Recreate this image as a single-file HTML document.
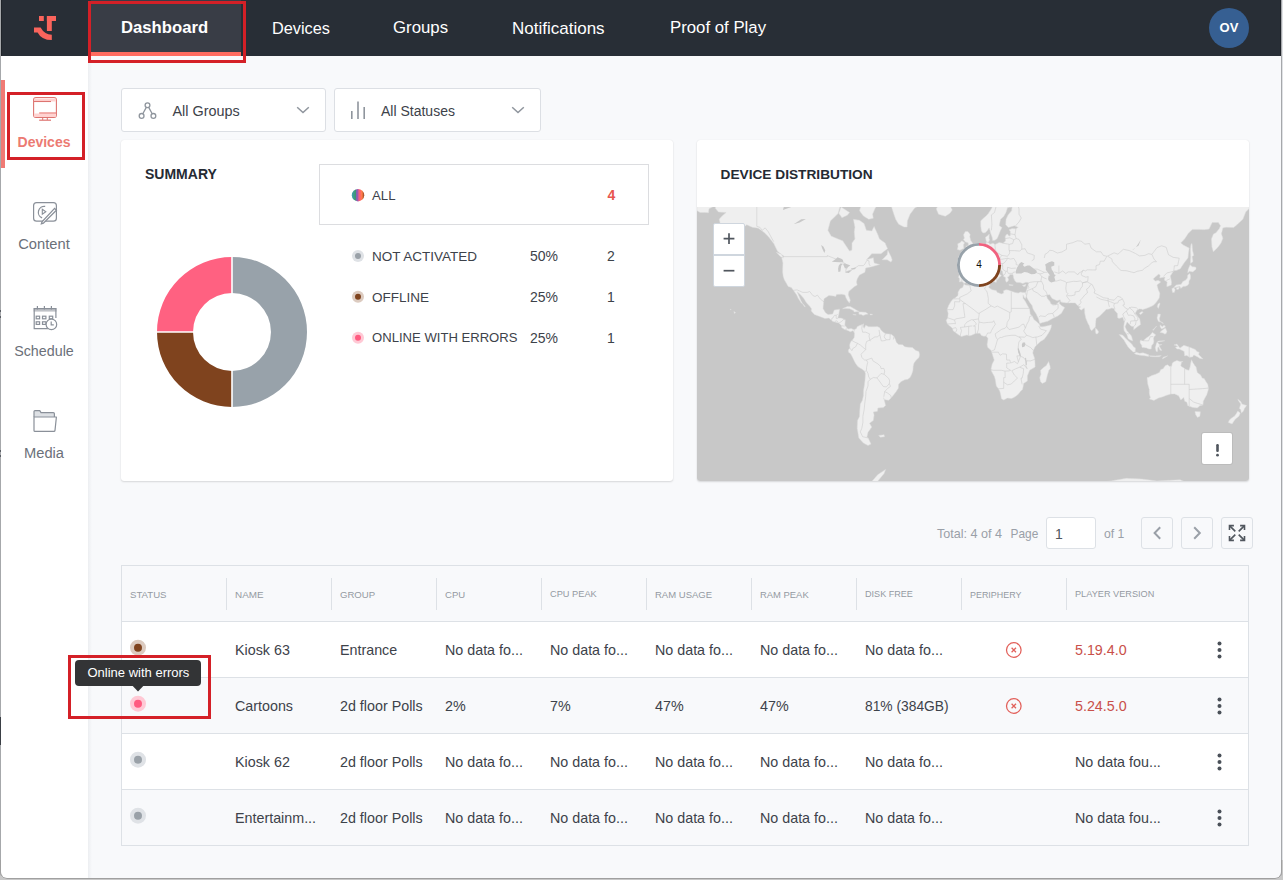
<!DOCTYPE html><html><head><meta charset="utf-8"><style>
*{box-sizing:border-box;margin:0;padding:0}
html,body{width:1283px;height:880px;overflow:hidden;background:#f8f9fb;font-family:"Liberation Sans",sans-serif;position:relative}
.a{position:absolute;line-height:1;white-space:nowrap}
svg{position:absolute;overflow:visible}
#nav{position:absolute;left:0;top:0;width:1283px;height:56px;background:#282e36}
.navt{position:absolute;top:19.6px;font-size:17px;line-height:1;color:#fff;white-space:nowrap}
#side{position:absolute;left:0;top:56px;width:88px;height:824px;background:#fff}
.card{position:absolute;background:#fff;border-radius:3px;box-shadow:0 1px 2px rgba(0,0,0,0.13),0 0 1px rgba(0,0,0,0.10)}
.dd{position:absolute;top:88px;height:44px;background:#fff;border:1px solid #dcdfe4;border-radius:3px}
.t14{font-size:14px;color:#3d424a}
.th{position:absolute;top:589.5px;font-size:10px;line-height:1;color:#949aa2;white-space:nowrap}
.sep{position:absolute;top:578px;width:1px;height:32px;background:#dde1e6}
.row{position:absolute;left:122px;width:1126px;height:56px;border-top:1px solid #dde1e6}
.cell{position:absolute;font-size:14.3px;line-height:1;color:#3d424a;white-space:nowrap}
.red{color:#c9504a}
.pbtn{position:absolute;top:517px;width:32px;height:32px;border:1px solid #dde1e6;border-radius:3px;background:#f8f9fb}
.redbox{position:absolute;border:3px solid #d42027}
</style></head><body>
<div id="nav">
<div style="position:absolute;left:91px;top:0;width:150px;height:56px;background:#393d46"></div>
<div style="position:absolute;left:91px;top:52px;width:150px;height:4px;background:#ff6b5f"></div>
<svg style="left:0;top:0" width="90" height="56" viewBox="0 0 90 56"><g fill="#fa645c"><rect x="39" y="16" width="4.8" height="5"/><rect x="46.9" y="16" width="9.1" height="5"/><rect x="46.9" y="16" width="4.9" height="15"/><path d="M34,27.6 L40.6,27.6 Q44.5,34.7 51.8,34.7 L51.8,40 Q41.5,40 37.6,32.4 L34,32.4 Z"/></g></svg>
<div class="navt" style="left:121px;font-weight:bold;font-size:16.7px">Dashboard</div>
<div class="navt" style="left:272px;font-size:16.3px">Devices</div>
<div class="navt" style="left:393px;font-size:16.8px">Groups</div>
<div class="navt" style="left:512px">Notifications</div>
<div class="navt" style="left:670px;font-size:16.8px">Proof of Play</div>
<div style="position:absolute;left:1209px;top:8px;width:40px;height:40px;border-radius:50%;background:#365f92;color:#fff;font-weight:bold;font-size:13px;line-height:40px;text-align:center">OV</div>
</div>
<div id="side"></div>
<div style="position:absolute;left:1px;top:80px;width:4px;height:88px;background:#f07a74"></div>
<svg style="left:0;top:90px" width="88" height="40" viewBox="0 90 88 40"><rect x="33.6" y="97.5" width="22.8" height="20" rx="2.5" fill="#fff" stroke="#dd7470" stroke-width="1.1"/><path d="M34.2,98.5 h21.6 v3 h-21.6z" fill="#ffd3d1"/><path d="M34.2,113.5 h21.6 v3.5 h-21.6z" fill="#ffd3d1"/><line x1="34" y1="101.5" x2="51" y2="101.5" stroke="#dd7470" stroke-width="1.1"/><line x1="39.2" y1="113" x2="56" y2="113" stroke="#ea7c78" stroke-width="1.2"/><path d="M42.7,117.5 v2.5 M47.3,117.5 v2.5" stroke="#dd7470" stroke-width="1"/><line x1="39.2" y1="120.2" x2="51" y2="120.2" stroke="#dd7470" stroke-width="1.2"/></svg>
<div class="a" style="left:0;width:88px;text-align:center;top:135.2px;color:#ec7a72;font-weight:bold;font-size:14px">Devices</div>
<svg style="left:0;top:195px" width="88" height="35" viewBox="0 195 88 35"><g fill="none" stroke="#8a9099" stroke-width="1.2"><rect x="33.6" y="202.6" width="22.8" height="18.6" rx="3"/><path d="M45.2,206.4 A6,6 0 0 0 42.1,217.9"/><path d="M42.3,209.2 L45.8,211.7 L42.3,214.2 Z" stroke-width="1.1"/><path d="M54.6,208.4 L56.4,210.2 L43.4,223.2 L41.4,223.8 L42,221.8 Z" fill="#fff" stroke-width="1.3"/></g></svg>
<div class="a" style="left:0;width:88px;text-align:center;top:236.6px;color:#6b7079;font-size:14.7px">Content</div>
<svg style="left:0;top:300px" width="88" height="35" viewBox="0 300 88 35"><g fill="none" stroke="#8a9099" stroke-width="1.2"><path d="M48,328.6 H34.2 V308.6 H55.9 V318"/><rect x="33.6" y="308" width="22.9" height="3.6" fill="#8a9099" stroke="none" opacity="0.55"/><path d="M37.4,306 v3.5 M44.4,306 v3.5 M51.4,306 v3.5"/><rect x="36.2" y="316.2" width="3.4" height="2.6"/><rect x="42.5" y="316.2" width="3.4" height="2.6"/><rect x="49.3" y="316.2" width="3.4" height="2.6"/><rect x="36.2" y="321.8" width="3.4" height="2.6"/><rect x="42.5" y="321.8" width="3.4" height="2.6"/><circle cx="51.4" cy="324.4" r="5.3" fill="#fff"/><path d="M51.2,321.5 V324.8 H53.8"/></g></svg>
<div class="a" style="left:0;width:88px;text-align:center;top:343.8px;color:#6b7079;font-size:14.3px">Schedule</div>
<svg style="left:0;top:405px" width="88" height="32" viewBox="0 405 88 32"><g stroke="#8a9099" stroke-width="1.2" stroke-linejoin="round"><path d="M34,417 V411.5 Q34,410.6 35,410.6 H39.8 L41,412.6 H53.3 Q54.4,412.6 54.4,413.7 V417" fill="#dde0e4"/><path d="M34,417 H56.4 L55,430.4 Q54.9,431.4 53.9,431.4 H35 Q34,431.4 34,430.4 Z" fill="#fff"/></g></svg>
<div class="a" style="left:0;width:88px;text-align:center;top:446px;color:#6b7079;font-size:14.7px">Media</div>
<div style="position:absolute;left:88px;top:56px;width:4px;height:824px;background:linear-gradient(to right,#eceef1,#f8f9fb)"></div>
<div class="dd" style="left:121px;width:205px"></div>
<svg style="left:130px;top:95px" width="35" height="30" viewBox="130 95 35 30"><g fill="none" stroke="#8f959d" stroke-width="1.3"><circle cx="147.5" cy="105.3" r="2.4"/><circle cx="141.6" cy="115.9" r="2.4"/><circle cx="153.4" cy="115.9" r="2.4"/><path d="M146.3,107.4 L142.8,113.8 M148.7,107.4 L152.2,113.8"/></g></svg>
<div class="a t14" style="left:172.5px;top:104.1px;font-size:14.4px">All Groups</div>
<svg style="left:290px;top:100px" width="25" height="20" viewBox="290 100 25 20"><path d="M297.2,107.3 L303,112.6 L308.8,107.3" fill="none" stroke="#8f959d" stroke-width="1.5"/></svg>
<div class="dd" style="left:334px;width:207px"></div>
<svg style="left:345px;top:95px" width="25" height="30" viewBox="345 95 25 30"><g stroke="#8f959d" stroke-width="1.6"><path d="M351.8,111 V119 M358,101.6 V119 M364.2,107 V119"/></g></svg>
<div class="a t14" style="left:381px;top:103.6px;font-size:14px">All Statuses</div>
<svg style="left:505px;top:100px" width="25" height="20" viewBox="505 100 25 20"><path d="M512.2,107.3 L518,112.6 L523.8,107.3" fill="none" stroke="#8f959d" stroke-width="1.5"/></svg>
<div class="card" style="left:121px;top:140px;width:552px;height:341px"></div>
<div class="a" style="left:145px;top:167.2px;font-size:14px;font-weight:bold;color:#252a33">SUMMARY</div>
<div style="position:absolute;left:319px;top:164px;width:330px;height:61px;border:1px solid #dcdde0"></div>
<svg style="left:350px;top:187px" width="16" height="16" viewBox="350 187 16 16"><defs><linearGradient id="gall" x1="0" x2="1" y1="0" y2="0"><stop offset="0" stop-color="#3aa0b0"/><stop offset="0.3" stop-color="#3f9670"/><stop offset="0.36" stop-color="#7d62b5"/><stop offset="0.5" stop-color="#a05aa8"/><stop offset="0.56" stop-color="#ef5a85"/><stop offset="0.7" stop-color="#ff6a62"/><stop offset="0.78" stop-color="#ff7a50"/><stop offset="0.9" stop-color="#e06a38"/><stop offset="1" stop-color="#7a3a18"/></linearGradient></defs><circle cx="358" cy="195.2" r="6.2" fill="url(#gall)"/></svg>
<div class="a t14" style="left:372px;top:188.8px;font-size:13.2px">ALL</div>
<div class="a" style="left:607.5px;top:188.2px;font-size:14px;font-weight:bold;color:#e8554e">4</div>
<svg style="left:350px;top:247px" width="16" height="16" viewBox="350 247 16 16"><circle cx="358" cy="255.9" r="6" fill="#dfe2e6"/><circle cx="358" cy="255.9" r="3" fill="#9aa1a8"/></svg>
<div class="a t14" style="left:372px;top:249.6px;font-size:13.5px">NOT ACTIVATED</div>
<div class="a t14" style="left:530px;top:249.3px;font-size:14px">50%</div>
<div class="a t14" style="left:607px;top:249.3px;font-size:14px">2</div>
<svg style="left:350px;top:288px" width="16" height="16" viewBox="350 288 16 16"><circle cx="358" cy="296.8" r="6" fill="#dccbc0"/><circle cx="358" cy="296.8" r="3" fill="#7f431e"/></svg>
<div class="a t14" style="left:372px;top:290.5px;font-size:13.5px">OFFLINE</div>
<div class="a t14" style="left:530px;top:290.2px;font-size:14px">25%</div>
<div class="a t14" style="left:607px;top:290.2px;font-size:14px">1</div>
<svg style="left:350px;top:329px" width="16" height="16" viewBox="350 329 16 16"><circle cx="358" cy="337.7" r="6" fill="#ffc9d5"/><circle cx="358" cy="337.7" r="3" fill="#ff5b80"/></svg>
<div class="a t14" style="left:372px;top:331.4px;font-size:13.1px">ONLINE WITH ERRORS</div>
<div class="a t14" style="left:530px;top:331.1px;font-size:14px">25%</div>
<div class="a t14" style="left:607px;top:331.1px;font-size:14px">1</div>
<svg style="left:150px;top:250px" width="165" height="165" viewBox="150 250 165 165"><path d="M232.00,257.00 A75.00,75.00 0 0 1 232.00,407.00 L232.00,371.00 A39.00,39.00 0 0 0 232.00,293.00 Z" fill="#98a2aa"/><path d="M232.00,407.00 A75.00,75.00 0 0 1 157.00,332.00 L193.00,332.00 A39.00,39.00 0 0 0 232.00,371.00 Z" fill="#7f431e"/><path d="M157.00,332.00 A75.00,75.00 0 0 1 232.00,257.00 L232.00,293.00 A39.00,39.00 0 0 0 193.00,332.00 Z" fill="#ff6181"/><path d="M232,255 V409 M155,332 H194" stroke="#fff" stroke-width="1.6"/></svg>
<div class="card" style="left:697px;top:140px;width:552px;height:341px;overflow:hidden">
<div style="position:absolute;left:0;top:67px;width:552px;height:274px;background:#c8c8c8;overflow:hidden">
<svg style="left:0;top:0" width="552" height="274" viewBox="0 0 552 274"><path d="M18.4,1.5L18.4,-42.1L141.1,-42.1L144.1,-7.9L143.4,-1.9L141.1,6.5L133.4,14.0L130.9,23.3L134.2,29.1L141.1,31.9L145.7,33.8L149.8,40.1L152.6,44.1L154.9,43.1L155.0,35.9L157.9,31.9L157.2,24.8L157.9,20.3L156.4,12.3L162.5,13.3L167.1,16.6L169.4,23.3L174.8,23.9L177.1,19.4L180.9,27.7L182.5,31.9L188.1,35.9L190.6,41.8L187.8,43.8L184.0,46.7L174.8,46.7L169.4,52.8L176.3,50.7L177.1,55.9L182.5,57.5L174.8,59.7L168.7,61.1L167.9,65.3L162.5,68.0L160.2,71.9L159.5,74.9L160.2,78.1L157.2,79.8L151.8,84.5L151.3,87.7L153.3,93.3L152.4,96.1L150.6,93.8L149.0,90.9L148.0,87.9L144.9,87.2L139.5,87.4L138.8,89.5L136.5,89.0L131.9,88.5L127.0,91.8L126.5,96.4L126.0,101.4L128.5,105.8L131.1,107.6L135.7,107.1L137.2,103.1L142.6,102.2L141.8,107.3L140.8,111.1L144.1,111.1L148.3,112.7L147.8,118.2L151.0,122.1L154.1,121.4L157.5,122.9L157.3,124.5L155.8,123.8L153.3,124.8L150.7,123.4L147.7,122.6L144.6,120.6L144.6,118.7L141.7,115.9L135.9,114.5L131.9,111.1L128.0,111.6L122.7,109.5L117.3,107.5L114.2,103.9L114.5,101.7L112.7,99.2L109.6,95.9L106.6,91.2L103.5,87.7L100.1,84.7L101.2,87.2L104.0,93.8L107.3,99.4L108.3,99.7L106.9,97.7L104.3,96.1L101.2,91.2L99.7,88.1L96.4,83.3L94.3,80.5L91.1,79.4L89.1,75.8L87.4,72.9L86.2,69.4L85.6,64.9L85.9,55.9L84.8,51.0L87.4,49.6L84.3,47.2L80.5,44.3L76.7,36.5L72.1,30.5L67.5,25.7L61.3,21.2L55.2,20.3L49.8,17.8L43.7,22.7L39.9,28.3L33.7,31.9L27.6,34.6L23.5,35.9L29.1,30.5L34.5,24.5L27.6,24.2L23.8,18.8L22.2,12.3L24.5,9.6L29.1,5.5L21.5,5.1ZM157.3,122.8L159.5,121.5L160.2,119.7L162.5,118.6L165.3,117.6L166.7,116.8L166.2,119.3L167.1,121.4L168.7,118.2L171.7,119.7L174.8,119.7L177.9,119.7L180.2,119.5L182.5,120.6L184.0,122.9L186.3,125.2L188.6,126.8L191.7,126.9L194.7,127.6L197.0,129.6L198.6,132.9L199.3,135.2L201.6,137.5L205.5,137.7L207.8,139.8L211.6,140.3L215.4,140.6L218.8,143.4L221.9,144.4L222.6,147.5L222.0,150.6L219.3,153.0L217.0,156.1L216.2,159.3L215.9,163.7L214.7,167.3L213.1,170.6L210.8,172.3L207.8,172.8L203.9,174.8L201.6,177.3L201.3,181.3L199.0,184.8L196.9,187.5L194.1,190.9L191.8,193.2L189.4,193.0L187.2,192.4L186.5,190.6L187.8,195.2L188.6,198.5L186.3,200.6L180.9,201.0L180.5,204.2L176.3,205.0L177.1,208.1L176.3,213.4L172.5,216.3L174.8,220.1L171.0,225.3L170.0,229.7L171.3,231.2L174.0,237.1L171.0,238.5L166.4,236.1L161.8,230.9L160.2,221.3L160.5,213.4L162.5,209.6L162.8,203.0L163.3,197.1L165.3,193.4L166.4,188.7L166.5,183.4L167.4,178.2L168.1,172.3L168.4,166.5L167.6,164.1L164.8,162.1L161.0,159.7L158.9,156.9L157.5,154.5L155.6,150.6L153.6,146.8L151.5,145.2L151.3,142.9L153.0,141.1L152.6,138.3L153.2,136.0L154.1,134.2L155.3,133.2L157.2,130.6L157.5,126.0L156.6,124.8ZM164.1,-61.9L187.1,-45.1L190.1,-31.0L191.7,-18.7L194.0,-12.1L197.8,-7.9L194.0,-1.9L196.3,5.5L198.6,12.3L201.6,17.2L207.0,20.0L210.1,20.0L210.4,14.0L213.1,7.2L217.7,1.1L223.1,-1.9L227.7,-8.7L236.1,-11.2L242.3,-18.7L243.0,-25.9L248.4,-42.1L245.3,-78.0L214.7,-109.5ZM241.5,7.2L239.2,1.8L241.5,-1.6L248.4,-0.8L253.0,-1.6L255.3,2.9L253.0,6.2L248.4,9.3L243.8,7.9ZM155.6,-28.4L167.1,-18.7L171.7,-10.0L180.9,-3.1L177.9,1.8L175.6,7.2L176.3,11.3L171.7,12.3L166.4,9.0L162.5,3.7L164.1,-1.9L159.5,-5.9L153.3,-16.5L141.1,-17.8L141.1,-31.0ZM144.1,-0.0L152.6,5.5L150.3,8.3L144.9,10.7L141.8,6.2ZM294.4,-25.9L552.0,-25.9L552.0,1.8L548.9,4.7L545.9,12.3L540.5,17.2L536.7,20.6L529.0,20.3L525.9,20.9L524.4,26.8L525.9,31.3L524.1,35.9L521.3,39.8L519.0,42.3L516.3,44.8L514.9,39.8L514.4,31.9L516.4,27.1L519.0,25.7L522.1,21.8L523.6,18.8L521.3,15.6L515.2,15.6L512.1,22.1L507.5,22.7L501.4,22.4L495.3,22.4L491.4,26.3L487.6,31.9L483.8,35.9L486.8,38.3L492.2,41.1L491.4,47.2L491.0,51.0L487.6,55.3L483.3,61.8L479.9,63.3L476.9,63.7L475.3,65.9L473.3,69.0L474.6,74.9L474.3,78.1L470.7,79.4L469.7,79.4L470.1,74.9L467.2,72.9L468.0,70.0L462.8,71.0L463.1,68.0L461.5,67.2L457.7,70.6L456.3,71.9L458.3,74.1L461.1,73.3L463.8,74.9L460.0,78.1L461.4,83.1L462.9,86.3L462.3,90.9L459.2,95.4L456.2,98.6L450.8,100.9L445.4,102.7L444.4,102.1L442.4,101.9L440.1,103.1L438.2,106.3L442.8,111.9L443.6,117.5L440.1,120.0L436.7,122.8L436.7,119.8L433.9,119.0L430.1,115.1L428.1,119.8L429.8,123.4L432.4,126.5L434.5,129.1L435.8,133.9L433.2,132.9L431.2,131.7L429.8,127.6L427.0,123.4L426.7,119.8L427.3,115.1L425.8,110.3L422.1,111.5L420.6,110.8L420.4,106.6L417.7,103.5L417.1,101.7L414.8,101.1L412.2,102.1L409.2,102.6L406.3,105.5L402.2,109.5L399.1,111.5L398.7,115.9L398.4,120.1L396.4,122.1L394.8,123.7L393.3,122.3L392.1,118.6L390.7,115.9L388.7,111.1L387.6,105.8L387.6,103.1L387.2,100.9L384.1,103.2L381.8,100.9L383.6,99.9L381.0,99.1L378.3,95.9L374.1,95.9L370.3,96.1L365.7,95.4L363.9,95.0L363.1,92.8L360.0,93.8L355.0,91.4L352.7,87.7L350.4,88.1L349.3,88.1L350.1,90.4L350.8,91.9L353.0,94.4L353.9,96.7L355.1,97.4L358.8,97.7L362.3,94.4L362.5,96.6L364.0,98.2L367.7,100.6L365.7,104.0L364.5,106.3L360.8,109.1L356.0,111.3L350.7,114.3L345.8,115.6L342.7,116.5L341.5,111.9L339.2,107.1L336.1,102.2L335.0,98.4L332.7,95.5L330.0,91.1L329.5,88.6L328.6,85.4L329.7,82.7L331.0,78.3L331.5,75.6L328.9,75.2L325.8,76.6L322.8,75.6L319.7,75.4L317.9,73.9L316.6,71.0L316.2,68.4L315.9,67.4L312.8,67.6L312.0,69.4L310.5,70.0L311.6,72.5L311.0,74.3L309.3,75.2L308.4,73.3L308.5,70.4L306.7,69.6L305.7,65.9L305.4,63.9L301.3,61.8L299.0,58.6L297.0,57.0L294.9,58.1L295.2,60.3L297.2,63.0L300.2,65.3L303.4,67.8L304.4,68.8L301.9,70.6L301.3,71.9L300.1,73.1L300.2,71.0L299.0,68.6L297.0,66.4L293.6,64.1L291.6,60.9L289.5,59.9L287.5,61.1L283.7,62.0L281.4,62.2L280.9,64.9L277.4,67.0L276.0,70.0L275.2,72.3L272.6,75.2L269.1,75.6L266.8,76.6L266.0,75.0L264.5,74.5L262.4,74.9L262.5,71.6L261.4,70.2L262.7,67.0L262.2,63.9L263.7,61.4L269.1,62.0L273.7,62.0L274.2,59.2L274.2,56.4L272.6,54.2L269.1,52.1L271.4,50.0L273.5,50.5L274.0,48.2L276.3,48.4L278.5,46.7L279.8,44.6L281.5,43.8L282.9,41.1L284.4,39.1L286.7,38.5L289.0,38.3L289.3,34.6L288.4,30.2L290.6,28.8L292.3,27.1L292.1,31.3L292.7,32.7L291.5,35.1L292.9,37.2L295.9,36.2L298.2,37.5L302.1,35.4L305.9,36.2L308.5,34.1L308.2,29.7L309.1,27.7L310.5,27.1L312.0,29.1L313.3,28.6L313.3,24.5L312.0,22.7L315.1,21.5L318.9,21.8L321.2,20.3L317.4,18.8L311.3,20.6L308.7,17.8L309.0,12.3L311.0,7.9L314.6,3.7L315.1,-0.0L310.5,0.7L309.0,5.5L306.7,9.6L303.6,12.3L302.5,17.2L302.4,18.8L305.1,20.6L303.6,23.3L301.3,29.1L300.2,31.6L297.9,33.3L295.6,33.5L295.2,30.5L293.6,26.3L292.9,23.3L292.1,20.9L290.6,23.3L288.3,25.7L286.0,26.0L284.4,23.9L283.7,18.8L283.7,14.0L285.2,12.3L289.0,9.0L291.3,6.5L294.4,1.8L295.6,-0.8L297.5,-5.9L299.0,-12.1ZM325.5,85.4L328.4,85.4L329.5,88.6L328.4,91.6L327.5,90.9L326.0,87.9L326.1,91.2L328.0,93.8L330.4,98.2L332.7,102.2L333.2,107.1L335.2,108.7L336.9,112.4L339.2,114.2L342.2,117.0L343.5,119.8L345.8,119.7L349.6,118.9L354.5,117.8L354.2,120.0L353.9,121.4L351.9,125.5L349.6,129.1L347.3,132.2L343.5,134.5L340.4,137.5L338.1,139.8L336.3,143.4L335.8,146.0L336.6,148.3L337.8,151.9L338.1,158.5L338.1,160.1L332.7,163.3L330.4,168.9L330.4,173.9L326.6,176.5L326.3,178.7L325.5,182.5L323.5,184.3L322.0,186.6L318.9,189.3L315.9,190.9L314.3,191.5L310.5,191.1L306.7,193.0L304.4,191.7L303.9,188.7L302.8,184.3L301.3,181.6L299.3,179.0L298.2,172.3L297.5,169.8L294.4,164.1L294.1,161.7L295.2,156.9L297.2,153.0L295.9,149.1L294.7,145.2L294.4,143.7L290.6,140.3L290.1,137.5L290.6,134.5L291.0,131.4L289.8,129.9L289.0,129.1L286.7,129.2L284.4,128.5L282.9,126.3L280.6,126.3L278.3,126.6L274.5,128.3L272.9,128.8L269.9,128.0L264.5,129.4L262.2,128.3L258.4,125.5L256.1,123.8L255.6,121.4L253.8,119.8L252.7,119.0L250.4,117.0L249.2,113.2L250.7,111.1L251.2,106.3L250.1,102.6L251.6,98.6L253.8,94.7L256.1,91.9L258.4,90.7L261.0,88.5L261.1,85.1L263.0,81.8L265.6,80.5L267.0,77.1L268.3,78.1L272.9,78.5L276.0,77.1L279.1,75.6L283.7,75.2L288.3,75.0L291.0,74.3L292.9,74.9L292.1,76.8L292.9,78.3L291.6,80.1L292.7,81.2L295.2,82.7L299.3,83.6L300.1,85.2L304.4,87.0L306.7,86.0L306.4,83.8L309.0,82.7L311.3,83.1L314.3,84.3L318.2,85.4L321.2,86.1L323.5,84.9ZM351.6,154.5L353.1,159.3L353.3,161.7L351.9,163.3L350.4,168.1L348.8,174.8L345.3,176.5L343.5,174.8L342.7,170.6L343.9,167.3L343.5,163.3L346.5,160.5L349.3,158.5ZM267.3,47.2L271.4,45.8L278.1,44.3L278.6,40.8L276.5,38.8L275.5,35.9L273.7,33.3L272.8,29.7L273.2,27.4L270.9,24.5L268.3,24.5L266.5,27.7L267.4,31.1L266.3,32.4L268.5,35.1L271.1,35.7L271.4,38.8L268.9,39.1L269.6,41.6L267.9,43.1L270.6,43.8ZM266.8,41.8L266.5,37.8L267.6,35.7L264.8,33.8L263.0,35.7L260.7,36.7L261.0,39.8L260.2,42.6L263.0,43.3L266.0,41.8ZM295.0,72.7L299.9,72.3L299.2,75.4L295.2,73.7ZM288.9,67.0L290.9,67.0L290.7,70.6L289.0,71.2ZM289.2,63.0L290.6,63.3L290.3,66.1L289.5,65.7ZM312.0,77.5L316.3,78.1L315.6,78.6L312.2,78.3ZM325.5,78.5L329.1,77.3L328.1,79.4L326.0,79.2ZM398.4,120.9L400.2,122.5L401.6,124.8L401.0,126.5L399.0,126.9L398.4,124.5ZM462.3,95.9L463.1,96.4L461.4,101.4L460.3,99.7L460.9,97.2ZM442.5,106.0L445.0,104.5L446.2,105.3L443.9,107.6L442.7,107.1ZM476.7,80.5L479.2,77.9L484.2,77.3L485.8,74.5L488.4,73.3L490.4,71.0L490.7,68.0L492.8,66.4L493.6,69.0L493.4,71.9L492.0,73.9L491.9,76.8L490.4,78.6L488.8,79.2L486.1,79.4L483.8,81.4L483.0,79.6L479.9,80.0L476.9,80.7ZM474.9,81.4L476.9,80.7L478.2,82.7L477.3,85.4L475.6,85.6L475.0,82.9ZM479.2,80.7L482.4,80.1L481.9,82.0L479.9,82.7ZM490.7,65.9L491.1,62.4L493.1,57.7L495.3,59.7L498.8,60.1L499.1,62.2L495.7,64.9L492.5,64.3ZM493.7,56.4L496.0,54.6L495.1,49.6L496.8,48.4L495.6,43.6L495.0,36.5L494.0,37.2L493.4,42.3L493.7,49.6L493.4,55.3ZM460.9,107.1L463.4,107.1L463.1,109.5L462.3,111.9L463.1,114.3L466.1,115.9L466.3,116.7L463.8,115.1L461.5,114.6L460.9,113.5L460.0,111.1L460.6,108.7ZM463.1,125.2L465.4,122.9L468.4,120.9L470.0,124.5L469.2,126.5L467.7,127.1L466.1,126.0L463.1,125.4ZM463.1,117.8L465.4,119.8L466.9,118.2L468.4,119.0L467.7,120.6L464.6,122.1L463.1,119.8ZM455.7,123.1L459.7,119.0L459.2,119.8L456.2,123.4ZM422.1,127.4L425.5,128.0L429.9,132.6L435.2,137.5L436.5,139.8L438.5,140.9L438.2,144.9L436.2,145.1L432.9,142.1L430.9,139.8L428.6,136.0L427.0,133.2L424.7,130.6ZM437.3,146.5L439.3,145.2L442.4,146.3L445.9,145.8L448.5,146.6L451.7,147.8L451.6,149.4L447.7,148.8L444.7,148.5L441.6,148.0L439.1,147.4ZM443.1,133.7L444.1,132.9L446.2,133.7L449.3,131.1L453.1,128.3L455.4,125.2L458.8,127.9L457.2,129.4L456.5,131.4L456.9,134.5L456.2,137.1L454.8,138.3L454.2,142.1L451.9,142.1L449.3,140.9L446.2,140.6L445.0,140.4L444.7,138.3L443.1,136.0ZM459.2,144.4L460.6,144.6L460.8,140.6L461.5,140.0L463.1,143.2L464.9,143.4L463.1,140.6L462.0,138.8L465.1,137.4L462.3,137.5L460.5,135.2L466.9,133.9L467.7,133.7L461.2,134.0L459.5,136.0L458.9,138.3L458.2,140.6ZM476.9,138.0L479.9,137.1L483.0,141.1L486.8,138.3L492.2,140.0L498.3,142.4L499.9,144.4L502.2,145.2L501.7,147.5L503.4,149.2L506.0,151.9L502.9,151.4L500.6,149.9L496.8,148.0L495.6,149.9L492.2,150.2L489.9,148.5L487.6,148.9L487.1,144.4L482.2,142.1L479.9,142.1L478.4,140.3L480.7,139.5L478.4,138.3ZM452.3,148.8L458.5,148.9L464.3,148.6L462.3,149.7L456.9,149.7L453.1,149.5ZM466.1,150.3L470.7,148.8L468.9,149.9L465.4,151.9ZM450.0,170.6L450.8,177.3L452.3,182.5L452.3,186.9L453.4,190.6L452.3,192.0L456.9,193.4L461.5,191.1L466.1,189.7L469.2,188.4L473.8,187.1L477.6,186.9L481.5,188.7L483.8,193.0L486.8,190.6L487.6,194.3L489.9,195.2L490.7,198.7L496.0,200.6L500.3,201.0L502.9,198.7L506.0,198.1L506.3,194.3L508.0,190.9L509.8,187.8L511.5,182.1L510.8,177.3L509.1,174.8L507.2,171.4L505.2,171.1L503.7,168.1L500.3,165.4L499.1,160.1L497.6,158.2L496.0,155.8L494.5,152.7L493.7,156.1L493.0,160.1L491.9,163.3L489.1,162.5L486.1,160.5L483.8,158.9L484.5,155.3L486.1,154.5L483.0,154.5L479.9,153.4L476.9,154.8L475.3,156.1L474.6,159.3L472.3,159.3L470.7,157.7L468.4,158.5L466.1,161.7L463.8,162.5L462.3,165.4L458.5,167.3L454.6,168.6L451.6,170.3ZM497.9,204.4L503.4,204.8L502.9,209.2L500.6,210.4L498.6,207.7ZM540.8,192.2L543.6,194.3L545.1,197.1L549.7,198.5L547.4,201.6L546.6,204.0L544.3,206.1L543.7,202.6L542.3,201.4L543.7,197.1L541.3,193.4ZM540.8,204.0L543.3,206.1L542.0,209.2L538.2,212.3L535.1,216.9L531.3,215.6L532.1,213.4L534.1,211.3L537.4,209.2L539.7,206.1ZM145.7,101.6L150.3,99.6L153.3,99.6L157.2,101.7L160.2,103.5L162.2,104.4L157.2,104.9L156.4,103.5L152.6,101.7L148.7,101.4L145.8,101.7ZM161.9,105.0L164.5,104.9L168.7,105.3L171.1,107.0L168.7,107.6L166.1,108.6L164.4,107.6L161.9,107.3ZM173.0,107.1L175.4,107.3L175.3,107.9L173.0,107.9ZM155.9,107.3L159.2,107.8L158.2,108.1L156.1,107.6ZM185.1,52.8L190.1,47.7L190.9,43.3L194.0,49.6L195.2,53.0L194.0,55.1L190.1,52.8ZM79.3,45.3L84.3,47.2L86.6,51.0L83.6,49.8ZM0.0,-25.9L0.0,3.7L3.1,5.5L7.7,5.5L11.5,5.8L12.0,1.8L15.6,-0.0L15.3,-25.9ZM0.0,411.1L0.0,333.9L30.7,326.8L61.3,314.1L92.0,305.6L122.7,300.4L153.3,303.0L161.0,288.5L171.7,277.9L180.9,267.6L188.6,262.4L187.1,266.5L180.9,273.9L184.0,288.5L184.0,314.1L214.7,333.9L245.3,303.0L276.0,288.5L306.7,288.5L337.3,284.1L360.3,275.9L383.3,277.9L398.7,275.9L414.0,273.9L429.3,271.3L444.7,272.0L460.0,273.9L483.0,272.8L506.0,282.0L529.0,290.7L536.7,295.4L552.0,326.8L552.0,411.1ZM36.8,104.4L38.6,105.5L37.4,106.5ZM33.3,102.1L34.3,102.6L33.4,102.7ZM181.7,228.4L187.1,227.7L187.5,229.7L183.2,230.2Z" fill="#efefef" stroke="#dcdcdc" stroke-width="0.5"/><path d="M348.1,57.5L351.9,55.3L355.0,54.2L357.3,55.3L357.3,58.6L354.2,59.7L354.7,62.4L356.5,64.9L357.3,67.4L358.8,68.0L357.3,70.0L358.6,74.3L354.2,75.4L351.9,73.9L351.1,71.9L351.7,68.6L353.1,68.4L351.1,65.9L348.8,62.8L348.8,59.7ZM318.9,66.4L320.6,66.6L324.3,66.6L327.4,64.9L330.4,65.5L334.3,67.2L337.6,67.0L339.8,65.7L339.6,63.7L337.0,61.8L334.3,59.7L332.7,58.4L330.4,58.4L327.4,59.7L325.8,57.9L327.4,56.4L324.3,55.1L322.3,56.8L321.4,58.6L319.9,60.7L318.9,63.9ZM134.8,54.8L138.0,55.1L142.6,55.3L146.3,55.3L146.0,53.0L144.9,51.9L140.5,50.3L138.8,51.9ZM141.4,64.9L143.4,64.5L143.8,61.8L144.3,58.6L146.0,56.8L143.4,56.6L141.7,58.8L141.1,61.8ZM146.3,56.6L148.0,56.4L151.0,57.5L153.3,58.6L151.0,60.1L149.5,62.8L149.5,60.7L148.0,61.4L146.4,58.1ZM148.1,65.5L151.8,65.9L154.9,63.3L151.8,63.7L148.7,64.9ZM153.8,62.2L157.9,62.2L159.2,60.5L157.2,60.7L154.1,61.6ZM127.3,46.0L128.3,43.6L126.5,39.8L124.2,38.0L125.0,41.1ZM96.6,17.2L104.3,12.3L108.9,12.0L102.7,15.6ZM85.9,2.9L94.3,-0.0L92.0,-3.9L87.4,-1.9ZM435.2,43.3L437.8,41.1L441.6,38.5L443.9,32.4L442.4,35.1L439.3,39.8L436.2,42.8ZM324.8,137.5L325.8,135.5L328.1,135.5L328.4,137.5L327.4,139.8L325.1,140.3ZM320.8,141.2L321.7,141.2L323.5,146.8L323.8,149.2L322.9,149.2L321.2,145.2ZM328.1,150.8L329.1,151.1L329.7,157.7L328.9,158.2L328.4,154.5Z" fill="#c8c8c8"/><path d="M87.4,49.6L130.3,49.6L130.3,48.6L138.6,51.9L146.4,55.3L149.5,57.9L148.7,64.9L154.9,62.8L158.7,60.7L161.5,58.6L166.4,58.6L167.9,57.0L169.9,53.3L172.0,53.9L172.0,57.0L173.3,59.0M59.8,-14.7L59.8,19.4L62.9,20.3L65.2,23.3L68.2,20.9L71.3,24.8L75.1,31.9L76.7,34.6M96.4,83.3L100.1,82.9L105.8,85.4L110.1,85.4L112.7,84.5L115.8,88.5L118.1,89.5L120.4,88.1L123.4,92.1L127.0,94.9M134.6,113.5L134.9,111.1L135.9,111.0L137.4,108.3L139.4,108.3L140.6,107.1M139.2,108.3L139.2,111.3L140.8,111.6M137.8,114.8L139.1,113.7L140.3,114.3L141.4,115.3M142.1,115.9L144.6,114.6L146.1,112.7L148.4,112.7M144.6,118.7L147.7,119.2M148.9,123.5L149.3,121.2M165.3,117.6L164.8,121.4L165.6,125.2L168.7,125.2L172.5,126.8L172.0,129.1L172.8,132.9L173.4,134.2M154.9,133.5L157.9,135.2L160.5,136.3L163.3,138.0L168.7,142.6L168.7,137.5L169.6,134.5L173.3,132.9L177.9,129.9L180.2,129.9L182.9,128.0L182.0,122.9M152.9,141.2L154.9,143.7L155.9,141.4L158.5,140.0L160.5,136.3M188.4,126.9L187.1,129.9L189.4,132.9L193.0,132.6L193.2,127.4M196.3,132.5L196.9,129.6M182.9,128.0L184.3,134.0L187.1,133.7L189.4,132.9M168.7,142.6L164.1,147.2L164.8,150.6L167.7,153.0L169.4,153.0L170.7,155.3L169.6,160.1L169.4,163.3L168.1,164.5M169.4,153.0L174.8,151.1L175.9,153.8L180.9,156.9L183.5,159.3L184.0,161.7L186.8,161.3L187.7,164.1L187.1,167.3M169.4,163.3L171.0,166.5L171.7,169.8L173.3,172.3L171.0,174.8L171.0,179.0L169.0,184.3L168.7,189.7L167.9,195.2L167.1,203.0L165.9,209.2L165.9,215.6L164.8,221.3L163.3,224.8L165.6,229.7L171.0,230.9M173.3,172.3L176.3,170.6L180.0,170.9L184.0,166.5L187.1,167.3M187.1,167.3L191.7,171.4L192.7,173.9L192.3,176.6L189.4,179.9L186.3,179.5L180.0,170.9M192.3,176.6L193.5,179.4L190.4,181.6L187.7,184.6L190.1,185.7L194.0,188.7L194.1,190.9M187.7,184.6L186.8,189.7M272.9,78.5L273.4,81.4L274.2,83.8L270.3,86.9L262.7,90.4L262.7,91.8L256.1,91.9M262.7,92.5L262.7,94.9L257.6,94.7L257.6,98.9L256.1,102.6L249.9,102.6M262.7,92.5L268.6,96.7L266.0,96.6L267.9,110.3L258.5,111.9L257.6,113.1L250.7,110.8M289.0,75.0L288.7,79.4L287.5,82.0L289.8,84.2L290.6,87.4L291.3,91.2L291.2,96.4L294.2,98.9L287.5,103.1L282.4,106.0L281.1,106.3L277.8,103.5L268.6,96.7M314.3,84.9L314.3,101.4L332.6,101.4M314.3,101.4L314.3,104.7L312.8,105.5L300.4,99.1L297.5,100.4L294.2,98.9M312.8,105.5L312.5,111.6L310.2,115.4L309.7,119.3L312.0,122.5L317.9,121.2L322.0,120.1L325.1,117.5L326.9,117.2L328.3,121.2M331.8,113.7L332.7,109.5L335.2,108.7M331.8,113.7L329.7,117.5L328.3,121.2L326.6,124.0L329.7,128.3M341.8,119.0L343.5,122.1L349.4,123.7L345.0,128.3L340.4,129.9L338.9,130.0M329.7,128.3L332.4,129.2L335.8,130.6L338.9,130.0L339.8,138.6M328.1,137.5L333.7,140.6L336.1,143.2M322.0,129.9L327.4,130.2L329.7,128.3M294.7,145.2L301.3,145.2L303.1,148.3L305.7,146.8L309.4,147.2L309.7,153.0L312.8,153.0L313.6,156.1L317.4,154.5L320.5,156.7L321.4,154.8L319.9,148.9L323.2,148.8L321.1,142.9L321.4,138.1L322.0,134.5L324.3,132.5L323.2,130.6L318.2,128.3L314.3,128.3L309.7,128.9L307.4,129.4L304.4,130.6L303.1,130.5L300.5,132.6L297.5,142.9L295.2,143.7M298.2,126.8L304.7,122.3L308.2,121.2L309.7,119.3M298.2,126.8L298.8,129.9L300.5,132.6M289.0,129.1L290.6,126.0L293.6,126.0L294.4,123.7L296.9,119.3L298.4,117.2L296.7,113.7L295.9,115.1L291.3,115.4L286.7,115.9L282.1,115.1L281.5,117.9L281.5,122.1L280.1,126.3M278.5,126.6L278.1,119.0L276.0,119.0M271.6,128.3L271.7,119.3L275.4,118.9M263.0,129.4L264.5,123.7L263.4,120.4L267.6,120.0L271.7,119.3M258.4,125.5L259.9,122.9L258.8,120.6L255.6,121.4M267.6,120.0L267.7,117.8L269.9,115.1L274.5,112.7L276.0,112.9L278.3,115.4L279.4,117.0L277.4,119.0M281.5,111.9L282.4,106.0M276.0,112.9L281.5,111.9L282.1,115.1M257.6,113.1L258.5,116.8L257.0,116.5L250.4,117.0M294.1,162.8L296.7,163.3L304.4,163.3L308.0,164.1L312.0,163.9L313.6,163.3L309.7,160.9L309.7,156.1L312.8,156.1M308.0,164.1L308.2,170.6L306.7,170.6L306.7,175.3L306.7,181.4L301.3,181.8M314.8,163.7L317.4,168.1L320.5,171.1L317.4,173.9L314.3,177.0L310.5,177.8L306.7,175.3M314.8,163.7L318.9,161.7L322.6,160.2L326.6,161.7L326.3,166.2L325.1,171.1L324.0,171.3L325.1,177.3M338.1,152.2L333.5,153.9L329.7,153.8L328.9,158.5L330.1,161.7L326.9,157.7L322.6,160.2M321.4,154.8L323.5,149.2L326.6,150.6L329.1,153.8M262.4,64.9L266.0,65.1L265.4,67.0L265.3,70.0L264.7,74.5M273.2,62.0L277.1,63.3L280.9,64.1M279.8,44.6L282.4,47.2L284.9,48.4L288.6,49.6L287.7,52.8L285.2,55.7L286.7,56.6L286.1,58.6L287.5,61.1M281.2,43.8L284.9,44.3L285.4,45.3L285.2,42.8L286.9,39.1M289.2,34.9L292.9,35.9M297.8,37.5L298.4,42.3L299.0,44.8L294.7,46.5L297.2,50.0L295.9,53.0L292.1,53.0L287.7,52.8M299.0,44.8L304.8,48.4L310.5,49.3L312.8,46.0L312.0,42.3L312.0,37.2L305.9,36.2M304.8,48.4L302.1,51.9L301.3,53.0L300.5,54.8L297.2,55.3L294.7,54.2L292.1,54.2L290.6,53.0M302.1,51.9L304.8,52.3L310.5,51.2M297.2,50.0L302.1,50.5M286.1,58.6L286.7,56.6L289.8,56.4L292.1,55.3L294.7,54.2L297.2,55.3L297.0,57.0M297.0,57.5L300.1,55.3L301.3,55.3L305.1,56.6L307.0,56.2L309.7,53.0L310.5,51.2L313.6,52.1L316.8,51.4L319.2,55.3L319.2,57.7L321.4,58.1M310.5,60.3L314.3,61.4L318.9,61.1M305.1,56.6L305.7,58.8L305.7,61.8L306.7,63.3L309.0,64.3L310.3,64.3L310.5,60.3M310.3,64.3L311.3,66.4L315.9,66.4L316.2,65.3L318.9,64.9M305.9,68.6L308.0,67.2L309.0,64.3M300.1,58.1L305.7,58.8M312.0,43.6L317.4,43.6L322.8,44.1L324.8,42.1L328.1,41.8L330.4,46.0L334.3,47.2L337.3,48.4L337.0,52.3L334.7,53.9M312.0,37.5L315.6,36.5L316.8,32.7L319.2,31.6L322.0,32.4L324.8,37.8L324.8,42.1M308.2,31.6L312.8,30.8L316.8,32.7M313.3,26.8L318.0,27.7L319.2,31.6M318.0,27.7L318.9,21.8M318.6,18.8L322.0,15.0L324.3,11.0L322.0,7.2L322.0,1.8L320.8,-1.9L320.5,-16.5M312.3,0.7L312.8,-10.0M294.4,23.3L294.9,17.2L294.4,7.9L297.5,5.5L300.5,-5.9L303.6,-10.0L307.4,-12.5M347.3,51.0L348.1,47.2L350.4,46.0L352.7,43.3L355.7,43.6L360.3,46.0L364.9,45.0L369.5,42.3L369.5,37.2L375.7,35.7L380.3,33.8L384.1,34.1L387.9,37.2L392.5,36.5L394.1,41.1L399.4,44.8L404.0,44.8L406.3,48.4L409.9,49.3M337.3,62.0L340.4,62.2L343.2,63.5L347.3,65.3L350.4,65.3M339.6,65.9L342.7,66.8L345.0,66.6L347.3,65.3M342.7,66.8L344.7,69.6L347.3,71.0L349.6,71.9M344.7,69.6L343.8,74.3M331.2,76.8L332.7,75.4L337.3,74.7L340.9,74.7L344.7,74.5M340.9,74.7L338.9,79.6L335.5,81.6L336.1,83.8L340.4,86.0L344.5,89.3L347.3,89.3L349.3,88.1M344.7,74.5L345.8,77.0L346.5,78.6L346.5,82.3L348.8,84.2L350.4,87.9M331.0,78.3L331.8,80.5L330.9,81.8M335.5,81.6L330.4,83.6L329.7,88.6M341.9,110.0L343.5,108.9L348.1,109.5L351.1,107.0L355.7,106.3L361.1,101.4L361.1,97.2L355.7,98.1M355.7,106.3L357.3,110.2M369.5,75.6L368.8,81.2L369.4,85.1L370.8,86.5L369.5,89.0L372.9,93.5L370.5,96.1M358.6,74.3L363.4,72.9L368.0,74.5L369.5,75.6M370.5,88.6L374.1,88.8L378.0,87.9L378.1,84.9L382.3,84.3L384.1,80.7L385.3,79.6L385.6,75.8L390.2,74.9M369.5,75.6L374.1,74.7L376.4,74.3L380.0,74.5L383.3,73.9L385.6,75.8L390.7,74.3L391.2,69.6L388.9,70.2L384.9,68.6L384.1,67.0L386.1,63.3L388.7,63.9L390.2,62.8L399.0,63.0L399.1,58.6L402.5,57.5L403.3,54.2L407.1,54.2L409.9,49.3M361.9,58.6L361.9,66.4L365.7,63.9L368.8,66.6L371.1,64.9L377.2,64.9L380.9,67.8L381.8,66.1L384.1,64.9L386.1,63.3M357.3,64.9L361.9,66.4M410.6,49.1L414.8,51.9L415.5,54.8L419.4,59.0L424.0,63.5L429.3,63.7L437.0,65.7L440.1,64.3L445.4,63.3L447.4,61.4L451.6,58.8L454.9,55.7L456.9,54.6L459.5,54.8L456.9,51.9L454.9,47.4M410.6,49.1L417.1,45.8L420.9,47.2L426.3,42.3L432.4,43.6L438.5,46.5L442.4,48.9L447.7,48.4L451.6,46.7L454.9,47.4M454.9,47.4L460.0,40.6L464.6,38.8L469.2,40.3L471.5,47.7L476.1,50.3L482.2,51.2L480.7,58.6L477.3,58.8L476.9,63.3L476.4,64.3M466.6,69.2L470.0,65.9L473.5,65.1L476.4,64.3M469.4,73.5L472.9,71.8M390.2,74.9L395.3,77.7L397.9,83.3L397.1,86.0L400.2,87.4L402.5,88.6L406.3,90.7L411.1,91.4L412.3,92.5L417.1,93.2L420.9,89.2L424.0,90.4L425.5,92.1L427.2,95.5L427.3,97.7L425.8,98.1L428.6,101.2L431.2,102.4L432.4,100.7L434.7,100.2L439.3,100.7L440.8,102.1M399.4,90.0L404.0,92.3L411.1,93.8L411.1,91.4M393.8,77.5L391.8,80.5L389.5,82.3L390.2,84.2L390.4,86.0L387.9,87.9L384.9,91.6L383.3,93.2L384.1,95.2L382.6,97.6L380.6,98.6M411.1,93.8L413.2,94.7L417.4,96.4L416.8,98.9L418.0,102.2M412.5,99.9L411.7,97.6L411.1,93.8M417.4,96.4L420.9,95.9L421.7,93.7L425.5,92.1M427.3,115.1L428.1,112.3L426.6,109.5L425.8,107.1L429.3,104.0L431.2,102.4M429.3,104.0L430.1,105.5L431.3,108.3L433.6,108.1L436.7,108.9L437.9,111.6L437.8,113.8L433.8,114.0L433.2,117.2M432.4,100.7L436.2,103.9L437.9,107.1L440.7,110.3L441.0,113.1L439.3,113.5L437.8,113.8M439.3,113.5L438.4,117.9L436.2,120.0M429.8,126.0L431.0,127.2L432.4,126.5M444.1,133.1L446.2,133.7L451.6,133.9L453.3,129.7L456.2,129.6M492.2,140.0L492.2,150.2M473.8,159.3L473.8,187.1M487.6,161.7L487.6,177.3L492.2,177.3L492.2,199.1M473.8,177.3L487.6,177.3M492.2,182.5L506.0,181.6L511.4,181.1M492.2,191.5L496.8,195.2L502.9,197.1L506.0,198.1" fill="none" stroke="#c9c9c9" stroke-width="0.55" stroke-linejoin="round"/></svg>
</div></div>
<div class="a" style="left:720.5px;top:167.6px;font-size:13.7px;font-weight:bold;color:#252a33">DEVICE DISTRIBUTION</div>
<div style="position:absolute;left:713px;top:223px;width:32px;height:64px;border:1px solid #cfd6de;border-radius:2px;background:#fff"></div>
<div style="position:absolute;left:714px;top:254px;width:30px;height:1.5px;background:#cfd6de"></div>
<svg style="left:713px;top:223px" width="32" height="64" viewBox="713 223 32 64"><g stroke="#50565e" stroke-width="1.7"><path d="M723.6,238.7 H734.4 M729,233.3 V244.1"/><path d="M723.6,270.7 H734.4"/></g></svg>
<svg style="left:950px;top:236px" width="60" height="60" viewBox="950 236 60 60"><circle cx="979" cy="265" r="22" fill="#fff"/><path d="M979,244.4 A20.6,20.6 0 0 1 999.6,265" fill="none" stroke="#f0627f" stroke-width="2.9"/><path d="M999.6,265 A20.6,20.6 0 0 1 979,285.6" fill="none" stroke="#7f431e" stroke-width="2.9"/><path d="M979,285.6 A20.6,20.6 0 0 1 979,244.4" fill="none" stroke="#98a2aa" stroke-width="2.9"/></svg>
<div class="a" style="left:969px;width:20px;text-align:center;top:259.5px;font-size:10px;color:#111">4</div>
<div style="position:absolute;left:1202px;top:433px;width:30px;height:31px;background:#fff;border-radius:2px;box-shadow:0 0 0 1px rgba(0,0,0,0.06)"></div>
<svg style="left:1202px;top:433px" width="30" height="31" viewBox="1202 433 30 31"><g fill="#50565e"><rect x="1216.2" y="444" width="2.6" height="8" rx="1.2"/><circle cx="1217.5" cy="455.2" r="1.4"/></g></svg>
<div class="a" style="left:937px;top:528px;font-size:12.6px;color:#9aa0a8">Total: 4 of 4</div>
<div class="a" style="left:1010.5px;top:529px;font-size:11.9px;color:#9aa0a8">Page</div>
<div style="position:absolute;left:1046px;top:517px;width:50px;height:32px;border:1px solid #dde1e6;border-radius:3px;background:#fff"></div>
<div class="a" style="left:1055px;top:526.5px;font-size:14px;color:#50565e">1</div>
<div class="a" style="left:1104px;top:528px;font-size:12.2px;color:#9aa0a8">of 1</div>
<div class="pbtn" style="left:1141px"></div><div class="pbtn" style="left:1181px"></div><div class="pbtn" style="left:1221px"></div>
<svg style="left:1141px;top:517px" width="115" height="32" viewBox="1141 517 115 32"><g fill="none" stroke-width="2"><path d="M1160.2,527.2 L1154.6,533 L1160.2,538.8" stroke="#9aa0a8"/><path d="M1194.2,527.2 L1199.8,533 L1194.2,538.8" stroke="#9aa0a8"/><g stroke="#50565e" stroke-width="1.6"><path d="M1229.5,525.6 L1235.3,531.4 M1244.5,525.6 L1238.7,531.4 M1229.5,540.4 L1235.3,534.6 M1244.5,540.4 L1238.7,534.6"/><path d="M1229.5,530 V525.6 H1233.9 M1240.1,525.6 H1244.5 V530 M1229.5,536 V540.4 H1233.9 M1240.1,540.4 H1244.5 V536"/></g></g></svg>
<div style="position:absolute;left:121px;top:565px;width:1128px;height:281px;border:1px solid #dde1e6;background:#f8f9fb"></div>
<div class="row" style="top:621px;background:#fff"></div>
<div class="row" style="top:677px;background:#f8f9fb"></div>
<div class="row" style="top:733px;background:#fff"></div>
<div class="row" style="top:789px;background:#f8f9fb"></div>
<div class="th" style="left:130px;font-size:9.65px;top:589.93px">STATUS</div>
<div class="th" style="left:235px;font-size:9.88px;top:589.74px">NAME</div>
<div class="th" style="left:340px;font-size:9.58px;top:589.99px">GROUP</div>
<div class="th" style="left:445px;font-size:9.55px;top:590.02px">CPU</div>
<div class="th" style="left:550px;font-size:9.24px;top:590.28px">CPU PEAK</div>
<div class="th" style="left:655px;font-size:9.52px;top:590.04px">RAM USAGE</div>
<div class="th" style="left:760px;font-size:9.43px;top:590.12px">RAM PEAK</div>
<div class="th" style="left:865px;font-size:9.09px;top:590.41px">DISK FREE</div>
<div class="th" style="left:970px;font-size:8.93px;top:590.54px">PERIPHERY</div>
<div class="th" style="left:1075px;font-size:9.19px;top:590.32px">PLAYER VERSION</div>
<div class="sep" style="left:226px"></div>
<div class="sep" style="left:331px"></div>
<div class="sep" style="left:436px"></div>
<div class="sep" style="left:541px"></div>
<div class="sep" style="left:646px"></div>
<div class="sep" style="left:751px"></div>
<div class="sep" style="left:856px"></div>
<div class="sep" style="left:961px"></div>
<div class="sep" style="left:1066px"></div>
<svg style="left:128px;top:637px" width="20" height="20" viewBox="128 637 20 20"><circle cx="138" cy="647.7" r="8" fill="#dccbc0"/><circle cx="138" cy="647.7" r="4" fill="#7f431e"/></svg>
<div class="cell" style="left:235px;top:643.3px">Kiosk 63</div>
<div class="cell" style="left:340px;top:643.3px">Entrance</div>
<div class="cell" style="left:445px;top:643.3px">No data fo...</div>
<div class="cell" style="left:550px;top:643.3px">No data fo...</div>
<div class="cell" style="left:655px;top:643.3px">No data fo...</div>
<div class="cell" style="left:760px;top:643.3px">No data fo...</div>
<div class="cell" style="left:865px;top:643.3px">No data fo...</div>
<svg style="left:1000px;top:636px" width="28" height="28" viewBox="1000 636 28 28"><g fill="none" stroke="#e2605a" stroke-width="1.25"><circle cx="1013.8" cy="650.0" r="7.3"/><path d="M1011.6,647.8 l4.4,4.4 M1016,647.8 l-4.4,4.4"/></g></svg>
<div class="cell red" style="left:1075px;top:643.3px">5.19.4.0</div>
<svg style="left:1210px;top:636px" width="20" height="28" viewBox="1210 636 20 28"><g fill="#4a5058"><circle cx="1219.5" cy="643.6" r="2"/><circle cx="1219.5" cy="650.0" r="2"/><circle cx="1219.5" cy="656.4" r="2"/></g></svg>
<svg style="left:128px;top:693px" width="20" height="20" viewBox="128 693 20 20"><circle cx="138" cy="703.7" r="8" fill="#ffc9d5"/><circle cx="138" cy="703.7" r="4" fill="#ff5b80"/></svg>
<div class="cell" style="left:235px;top:699.3px">Cartoons</div>
<div class="cell" style="left:340px;top:699.3px">2d floor Polls</div>
<div class="cell" style="left:445px;top:699.3px">2%</div>
<div class="cell" style="left:550px;top:699.3px">7%</div>
<div class="cell" style="left:655px;top:699.3px">47%</div>
<div class="cell" style="left:760px;top:699.3px">47%</div>
<div class="cell" style="left:865px;top:699.3px;font-size:13.8px;top:699.7px">81% (384GB)</div>
<svg style="left:1000px;top:692px" width="28" height="28" viewBox="1000 692 28 28"><g fill="none" stroke="#e2605a" stroke-width="1.25"><circle cx="1013.8" cy="706.0" r="7.3"/><path d="M1011.6,703.8 l4.4,4.4 M1016,703.8 l-4.4,4.4"/></g></svg>
<div class="cell red" style="left:1075px;top:699.3px">5.24.5.0</div>
<svg style="left:1210px;top:692px" width="20" height="28" viewBox="1210 692 20 28"><g fill="#4a5058"><circle cx="1219.5" cy="699.6" r="2"/><circle cx="1219.5" cy="706.0" r="2"/><circle cx="1219.5" cy="712.4" r="2"/></g></svg>
<svg style="left:128px;top:749px" width="20" height="20" viewBox="128 749 20 20"><circle cx="138" cy="759.7" r="8" fill="#dfe2e6"/><circle cx="138" cy="759.7" r="4" fill="#9aa1a8"/></svg>
<div class="cell" style="left:235px;top:755.3px">Kiosk 62</div>
<div class="cell" style="left:340px;top:755.3px">2d floor Polls</div>
<div class="cell" style="left:445px;top:755.3px">No data fo...</div>
<div class="cell" style="left:550px;top:755.3px">No data fo...</div>
<div class="cell" style="left:655px;top:755.3px">No data fo...</div>
<div class="cell" style="left:760px;top:755.3px">No data fo...</div>
<div class="cell" style="left:865px;top:755.3px">No data fo...</div>
<div class="cell " style="left:1075px;top:755.3px">No data fou...</div>
<svg style="left:1210px;top:748px" width="20" height="28" viewBox="1210 748 20 28"><g fill="#4a5058"><circle cx="1219.5" cy="755.6" r="2"/><circle cx="1219.5" cy="762.0" r="2"/><circle cx="1219.5" cy="768.4" r="2"/></g></svg>
<svg style="left:128px;top:805px" width="20" height="20" viewBox="128 805 20 20"><circle cx="138" cy="815.7" r="8" fill="#dfe2e6"/><circle cx="138" cy="815.7" r="4" fill="#9aa1a8"/></svg>
<div class="cell" style="left:235px;top:811.3px">Entertainm...</div>
<div class="cell" style="left:340px;top:811.3px">2d floor Polls</div>
<div class="cell" style="left:445px;top:811.3px">No data fo...</div>
<div class="cell" style="left:550px;top:811.3px">No data fo...</div>
<div class="cell" style="left:655px;top:811.3px">No data fo...</div>
<div class="cell" style="left:760px;top:811.3px">No data fo...</div>
<div class="cell" style="left:865px;top:811.3px">No data fo...</div>
<div class="cell " style="left:1075px;top:811.3px">No data fou...</div>
<svg style="left:1210px;top:804px" width="20" height="28" viewBox="1210 804 20 28"><g fill="#4a5058"><circle cx="1219.5" cy="811.6" r="2"/><circle cx="1219.5" cy="818.0" r="2"/><circle cx="1219.5" cy="824.4" r="2"/></g></svg>
<div style="position:absolute;left:75px;top:660px;width:126px;height:26px;background:#333436;border-radius:4px"></div>
<svg style="left:128px;top:685px" width="20" height="8" viewBox="128 685 20 8"><path d="M132.5,685.8 L138,691.4 L143.5,685.8 Z" fill="#333436"/></svg>
<div class="a" style="left:87.5px;top:666.1px;font-size:13px;color:#fff">Online with errors</div>
<div style="position:absolute;left:0;top:0;width:1px;height:880px;background:#a6a8ab"></div>
<div style="position:absolute;left:1px;top:0;width:1px;height:56px;background:#1f2329"></div>
<div style="position:absolute;left:1280px;top:0;width:1px;height:56px;background:#1f2329"></div>
<div style="position:absolute;left:1281px;top:0;width:1px;height:880px;background:#a6a8ab"></div>
<div style="position:absolute;left:1282px;top:0;width:1px;height:880px;background:#e0e2e5"></div>
<div style="position:absolute;left:0;top:860px;width:1283px;height:20px;overflow:hidden"><div style="position:absolute;left:0;top:-20px;width:1282px;height:39px;border:1px solid #a0a0a0;border-top:none;border-radius:0 0 7px 7px;box-shadow:0 0 0 20px #c8c8c8"></div></div>
<div style="position:absolute;left:0;top:717px;width:1px;height:28px;background:#3a3f45"></div>
<div style="position:absolute;left:0;top:310px;width:1px;height:2px;background:#5a5f65"></div><div style="position:absolute;left:0;top:316px;width:1px;height:2px;background:#5a5f65"></div>
<div style="position:absolute;left:0;top:450px;width:1px;height:2px;background:#5a5f65"></div><div style="position:absolute;left:0;top:455px;width:1px;height:2px;background:#5a5f65"></div>
<div class="redbox" style="left:88px;top:1px;width:158px;height:62px"></div>
<div class="redbox" style="left:7px;top:92px;width:78px;height:68px"></div>
<div class="redbox" style="left:68px;top:655px;width:143px;height:64px"></div>
</body></html>
